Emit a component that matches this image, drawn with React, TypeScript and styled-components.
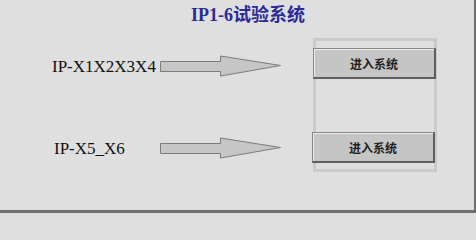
import styled, { createGlobalStyle } from "styled-components"

const GlobalStyle = createGlobalStyle`
  html, body {
    margin: 0;
    padding: 0;
    background: #dfdfdf;
  }
`

const SERIF = `"Liberation Serif", "Noto Sans CJK SC", serif`
const CJK = `"Noto Sans CJK SC", "Liberation Sans", sans-serif`

interface Entry {
  label: string
  action: string
}

const ENTRIES: Entry[] = [
  { label: "IP-X1X2X3X4", action: "进入系统" },
  { label: "IP-X5_X6", action: "进入系统" },
]

const Arrow = () => (
  <ArrowSvg width="122" height="22" viewBox="0 0 122 22">
    <path
      d="M0.5 6.5 H60.5 V1 L120.5 10.5 L60.5 21 V16.5 H0.5 Z"
      fill="#c6c6c6"
      stroke="#7c7c7c"
      strokeWidth="1"
    />
  </ArrowSvg>
)

export default function App() {
  return (
    <>
      <GlobalStyle />
      <Frame>
        <TitleRow>
          <Title>IP1-6试验系统</Title>
        </TitleRow>
        <Body>
          <Routes>
            {ENTRIES.map((e, i) => (
              <Route key={e.label}>
                <Label $indent={i === 1 ? 2 : 0}>{e.label}</Label>
                <Arrow />
              </Route>
            ))}
          </Routes>
          <GroupBox>
            {ENTRIES.map((e, i) => (
              <EnterButton key={e.label} $shift={i === 1 ? -1 : 0}>
                {e.action}
              </EnterButton>
            ))}
          </GroupBox>
        </Body>
      </Frame>
    </>
  )
}

const Frame = styled.div`
  box-sizing: border-box;
  width: 476px;
  height: 213px;
  background: #dfdfdf;
  border-right: 2px solid #6f6f6f;
  border-bottom: 3px solid #6f6f6f;
  display: flex;
  flex-direction: column;
`

const TitleRow = styled.div`
  display: flex;
  justify-content: center;
  padding: 5px 0 0 22px;
  height: 38px;
  box-sizing: border-box;
`

const Title = styled.span`
  font-family: ${SERIF};
  font-size: 18px;
  font-weight: bold;
  color: #2b2b98;
  line-height: 20px;
`

const Body = styled.div`
  display: flex;
  align-items: flex-start;
`

const Routes = styled.div`
  display: flex;
  flex-direction: column;
  gap: 60px;
  padding: 17px 0 0 52px;
  width: 261px;
`

const Route = styled.div`
  display: flex;
  align-items: center;
  height: 22px;
`

const Label = styled.span<{ $indent: number }>`
  box-sizing: border-box;
  width: 108px;
  padding: 1px 0 0 ${(p) => p.$indent}px;
  font-family: ${SERIF};
  font-size: 17px;
  color: #111;
  line-height: 22px;
`

const ArrowSvg = styled.svg`
  display: block;
`

const GroupBox = styled.div`
  box-sizing: border-box;
  width: 124px;
  height: 134px;
  border: 3px solid #cacaca;
  display: flex;
  flex-direction: column;
  gap: 53px;
  padding-top: 7px;
`

const EnterButton = styled.button<{ $shift: number }>`
  box-sizing: border-box;
  width: 123px;
  height: 31px;
  margin-left: ${(p) => -3 + p.$shift}px;
  padding: 0;
  background: #c5c5c5;
  border: 1px solid #858585;
  border-right: 2px solid #5e5e5e;
  border-bottom: 2px solid #5e5e5e;
  box-shadow: inset 1px 1px 0 #ededed;
  font-family: ${CJK};
  font-size: 12px;
  font-weight: bold;
  color: #222;
  cursor: pointer;
`
